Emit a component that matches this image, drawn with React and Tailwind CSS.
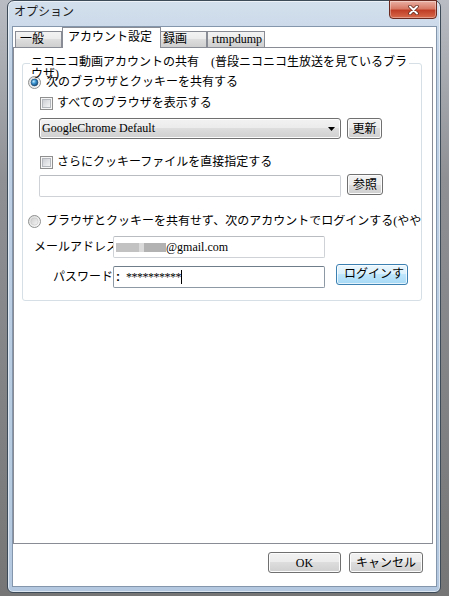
import React from 'react';

const btn = "flex items-center justify-center rounded-[3px] border border-[#707070] bg-[linear-gradient(#f2f2f2,#ebebeb_50%,#dddddd_50%,#cfcfcf)] shadow-[inset_0_0_0_1px_#fcfcfc] text-[12px] leading-[14px] text-black";

const Radio = ({ checked }) => (
    <svg width="13" height="13" viewBox="0 0 13 13" className="shrink-0">
        <defs>
            <linearGradient id="rOuter" x1="0" y1="0" x2="1" y2="1">
                <stop offset="0" stopColor="#d8d8d8" />
                <stop offset="1" stopColor="#fdfdfd" />
            </linearGradient>
            <radialGradient id="rDot" cx="0.38" cy="0.35" r="0.7">
                <stop offset="0" stopColor="#c0ebfd" />
                <stop offset="0.45" stopColor="#3a94d2" />
                <stop offset="1" stopColor="#15466f" />
            </radialGradient>
            <linearGradient id="rOff" x1="0" y1="0" x2="1" y2="1">
                <stop offset="0" stopColor="#cfcfcf" />
                <stop offset="1" stopColor="#f5f5f5" />
            </linearGradient>
        </defs>
        <circle cx="6.5" cy="6.5" r="6" fill="url(#rOuter)" stroke="#8e8f8f" />
        {checked ? (
            <circle cx="6.5" cy="6.5" r="3.4" fill="url(#rDot)" stroke="#1d4d78" strokeWidth="0.7" />
        ) : (
            <circle cx="6.5" cy="6.5" r="3.6" fill="url(#rOff)" stroke="#c4c4c4" strokeWidth="0.6" />
        )}
    </svg>
);

const Check = () => (
    <svg width="13" height="13" viewBox="0 0 13 13" className="shrink-0">
        <defs>
            <linearGradient id="cbIn" x1="0" y1="0" x2="1" y2="1">
                <stop offset="0" stopColor="#c9ccd1" />
                <stop offset="1" stopColor="#f7f7f7" />
            </linearGradient>
        </defs>
        <rect x="0.5" y="0.5" width="12" height="12" fill="#f6f6f6" stroke="#8f8f8f" />
        <rect x="2.5" y="2.5" width="8" height="8" fill="url(#cbIn)" stroke="#b4b8bd" />
    </svg>
);

const App = () => {
    return (
        <div className="w-[449px] h-[596px] overflow-hidden flex pl-[7px] pr-[8px] pb-[3px] bg-[linear-gradient(#b9bdc3,#8e9094_30%,#767676)] font-['Liberation_Serif','Noto_Sans_CJK_JP',serif] text-black">
            <div className="flex-1 flex flex-col rounded-t-[7px] rounded-b-[6px] border border-[#3d4a58] bg-[linear-gradient(#d3dfec,#bfd1e5_12%,#b4c9df)] shadow-[inset_0_0_0_1px_rgba(255,255,255,0.55)]">
                {/* title bar */}
                <div className="h-[25px] flex items-start justify-between">
                    <div className="pl-[6px] pt-[5px] text-[12px] leading-[13px] text-[#1a1a1a]">オプション</div>
                    <div className="w-[48px] h-[19px] -mt-px mr-[3px] flex items-center justify-center rounded-b-[4px] border border-[#6b2a1f] bg-[linear-gradient(#eab0a3,#d77a66_45%,#c03e26_55%,#d86a4c)] shadow-[inset_0_0_0_1px_rgba(255,255,255,0.35)]">
                        <svg width="11" height="10" viewBox="0 0 11 10">
                            <path d="M2 1.5 L9 8.5 M9 1.5 L2 8.5" stroke="#5a2418" strokeWidth="3.4" strokeLinecap="round" />
                            <path d="M2 1.5 L9 8.5 M9 1.5 L2 8.5" stroke="#ffffff" strokeWidth="2" strokeLinecap="round" />
                        </svg>
                    </div>
                </div>

                {/* client area */}
                <div className="flex-1 flex flex-col ml-[4px] mr-[3px] mb-[5px] border border-[#8396ab] bg-white">
                    {/* tabs */}
                    <div className="relative z-10 h-[20px] flex items-end pl-[2px]">
                        <div className={`w-[47px] h-[16px] border border-b-0 border-[#898c95] bg-[linear-gradient(#f3f3f3,#ebebeb_50%,#dddddd_50%,#cfcfcf)] pl-[4px] text-[12px] leading-[15px]`}>一般</div>
                        <div className="w-[99px] h-[21px] -mb-px border border-b-0 border-[#898c95] bg-white pl-[5px] text-[12px] leading-[19px]">アカウント設定</div>
                        <div className="w-[46px] h-[16px] border border-b-0 border-l-0 border-[#898c95] bg-[linear-gradient(#f3f3f3,#ebebeb_50%,#dddddd_50%,#cfcfcf)] pl-[2px] text-[12px] leading-[15px]">録画</div>
                        <div className="w-[58px] h-[16px] border border-b-0 border-[#898c95] bg-[linear-gradient(#f3f3f3,#ebebeb_50%,#dddddd_50%,#cfcfcf)] pl-[4px] text-[12px] leading-[15px]">rtmpdump</div>
                    </div>

                    {/* tab page */}
                    <div className="h-[497px] mr-[3px] border border-[#898c95] bg-white flex flex-col">
                        <div className="relative ml-[8px] mt-[15px] w-[400px] border border-[#d5dfe5] rounded-[3px] pb-[12px] text-[12px] leading-[13px]">
                            <div className="absolute left-[7px] top-[-8px] leading-[12px] whitespace-nowrap">
                                <span className="bg-white pl-px pr-[2px]">ニコニコ動画アカウントの共有　(普段ニコニコ生放送を見ているブラ</span>
                                <br />
                                <span className="pl-px">ウザ)</span>
                            </div>

                            <div className="mt-[12px] h-[13px] flex items-center pl-[5px]">
                                <Radio checked />
                                <span className="ml-[5px]">次のブラウザとクッキーを共有する</span>
                            </div>

                            <div className="mt-[8px] h-[13px] flex items-center pl-[17px]">
                                <Check />
                                <span className="ml-[4px]">すべてのブラウザを表示する</span>
                            </div>

                            <div className="mt-[8px] h-[21px] flex items-center pl-[16px] gap-[6px]">
                                <div className="w-[302px] h-[21px] flex items-center justify-between rounded-[3px] border border-[#707070] bg-[linear-gradient(#f2f2f2,#ebebeb_50%,#dddddd_50%,#cfcfcf)] shadow-[inset_0_0_0_1px_#fcfcfc] pl-[2px] pr-[5px]">
                                    <span>GoogleChrome Default</span>
                                    <svg width="7" height="4" viewBox="0 0 7 4">
                                        <path d="M0 0H7L3.5 4Z" fill="#000" />
                                    </svg>
                                </div>
                                <div className={`${btn} w-[35px] h-[21px]`}>更新</div>
                            </div>

                            <div className="mt-[17px] h-[13px] flex items-center pl-[17px]">
                                <Check />
                                <span className="ml-[4px]">さらにクッキーファイルを直接指定する</span>
                            </div>

                            <div className="mt-[6px] h-[22px] flex items-start pl-[16px] gap-[6px]">
                                <div className="w-[302px] h-[22px] rounded-[2px] border border-[#cfd2d6] border-t-[#b9bcc1] bg-white"></div>
                                <div className={`${btn} w-[36px] h-[21px] -mt-px`}>参照</div>
                            </div>

                            <div className="mt-[18px] h-[13px] flex items-center pl-[5px] overflow-hidden whitespace-nowrap">
                                <Radio />
                                <span className="ml-[5px]">ブラウザとクッキーを共有せず、次のアカウントでログインする(ややこしい)</span>
                            </div>

                            <div className="mt-[8px] h-[22px] flex items-center pl-[11px]">
                                <div className="w-[79px] overflow-hidden whitespace-nowrap">メールアドレス：</div>
                                <div className="w-[212px] h-[22px] flex items-center rounded-[2px] border border-[#cfd2d6] border-t-[#b9bcc1] bg-white pl-[2px]">
                                    <span className="w-[23px] h-[9px] bg-[#c2c2c2]"></span>
                                    <span className="w-[5px] h-[9px] bg-[#dadada]"></span>
                                    <span className="w-[22px] h-[9px] bg-[#b2b2b2]"></span>
                                    <span className="leading-[14px]">@gmail.com</span>
                                </div>
                            </div>

                            <div className="mt-[8px] h-[22px] flex items-start pl-[11px]">
                                <div className="w-[79px] h-[22px] flex items-center justify-end whitespace-nowrap">パスワード</div>
                                <div className="w-[212px] h-[22px] flex items-center rounded-[2px] border border-[#8d99a5] border-t-[#6f7c89] bg-white pl-[2px]">
                                    <span className="font-bold text-[12px] leading-[14px] font-['Liberation_Sans',sans-serif]">:</span>
                                    <span className="ml-[6px] text-[12px] leading-[14px] tracking-[-0.5px]">**********</span>
                                    <span className="w-px h-[14px] bg-black"></span>
                                </div>
                                <div className="ml-[11px] -mt-[2px] w-[72px] h-[21px] flex items-center justify-center overflow-hidden whitespace-nowrap rounded-[3px] border border-[#3c7fb1] bg-[linear-gradient(#eaf6fd,#d9f0fc_50%,#bee6fd_50%,#a7d9f5)] shadow-[inset_0_0_0_1px_rgba(255,255,255,0.7)] text-[12px]">
                                    <span className="pl-[4px]">ログインす</span>
                                </div>
                            </div>
                        </div>
                    </div>

                    {/* dialog buttons */}
                    <div className="mt-[8px] flex justify-end gap-[8px] pr-[13px]">
                        <div className={`${btn} w-[73px] h-[21px]`}>OK</div>
                        <div className={`${btn} w-[74px] h-[21px]`}>キャンセル</div>
                    </div>
                </div>
            </div>
        </div>
    );
};

export default App;
